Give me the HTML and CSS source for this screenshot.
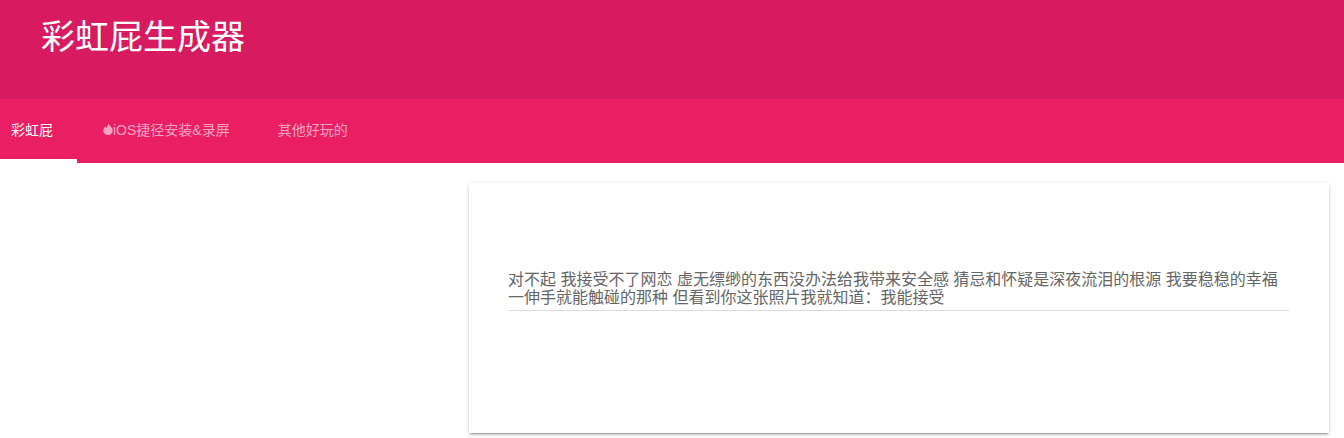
FILE: index.html
```html
<!DOCTYPE html>
<html lang="zh-CN">
<head>
    <meta charset="UTF-8">
    <title>彩虹屁生成器</title>
    <link rel="stylesheet" href="styles.css">
</head>
<body>
    <header class="title-bar">
        <h1 class="title">彩虹屁生成器</h1>
    </header>

    <nav class="tabs">
        <a class="tab first active">彩虹屁</a>
        <a class="tab">
            <svg class="fire" viewBox="0 0 10 12" width="10" height="12">
                <path d="M5.2 0C5.6 2 8 3.2 9.2 5.4C10.6 8.4 8.6 12 5 12C1.6 12 -0.4 9 0.6 6.2C1 5 1.8 4.2 2.2 3.2C2.8 3.8 3 4.4 3.1 5C4.2 3.8 5.4 2.2 5.2 0Z"/>
            </svg>iOS捷径安装&amp;录屏
        </a>
        <a class="tab">其他好玩的</a>
    </nav>

    <main class="content">
        <section class="card">
            <div class="result">对不起 我接受不了网恋 虚无缥缈的东西没办法给我带来安全感 猜忌和怀疑是深夜流泪的根源 我要稳稳的幸福 一伸手就能触碰的那种 但看到你这张照片我就知道：我能接受</div>
        </section>
    </main>
</body>
</html>
```
FILE: styles.css
```css
body {
    margin: 0;
    padding: 0;
    height: 438px;
    overflow: hidden;
    background-color: #fff;
    font-family: "Liberation Sans", "Noto Sans CJK SC", sans-serif;
}

.title-bar {
    height: 99px;
    box-sizing: border-box;
    padding: 15px 0 0 41px;
    background-color: #d81b60;
}

.title {
    margin: 0;
    font-size: 34px;
    line-height: 44px;
    font-weight: normal;
    color: #fff;
}

.tabs {
    display: flex;
    height: 64px;
    background-color: #e91e63;
}

.tab {
    display: flex;
    align-items: center;
    box-sizing: border-box;
    height: 64px;
    padding: 0 24px 4px;
    font-size: 14px;
    color: rgba(255, 255, 255, 0.6);
    white-space: nowrap;
}

.tab.first {
    padding-left: 11px;
}

.tab.active {
    color: #fff;
    border-bottom: 4px solid #fff;
    padding-bottom: 0;
}

.fire {
    fill: rgba(255, 255, 255, 0.6);
    margin-left: 2px;
}

.content {
    display: flex;
    justify-content: flex-end;
    padding: 20px 15px 0 0;
}

.card {
    width: 860px;
    height: 250px;
    box-sizing: border-box;
    padding: 88px 40px 0 39px;
    background-color: #fff;
    box-shadow: 0 2px 2px 0 rgba(0, 0, 0, 0.14), 0 3px 1px -2px rgba(0, 0, 0, 0.2), 0 1px 5px 0 rgba(0, 0, 0, 0.12);
}

.result {
    padding-bottom: 3px;
    font-size: 16px;
    line-height: 18px;
    color: #666;
    border-bottom: 1px solid #ddd;
}
```
